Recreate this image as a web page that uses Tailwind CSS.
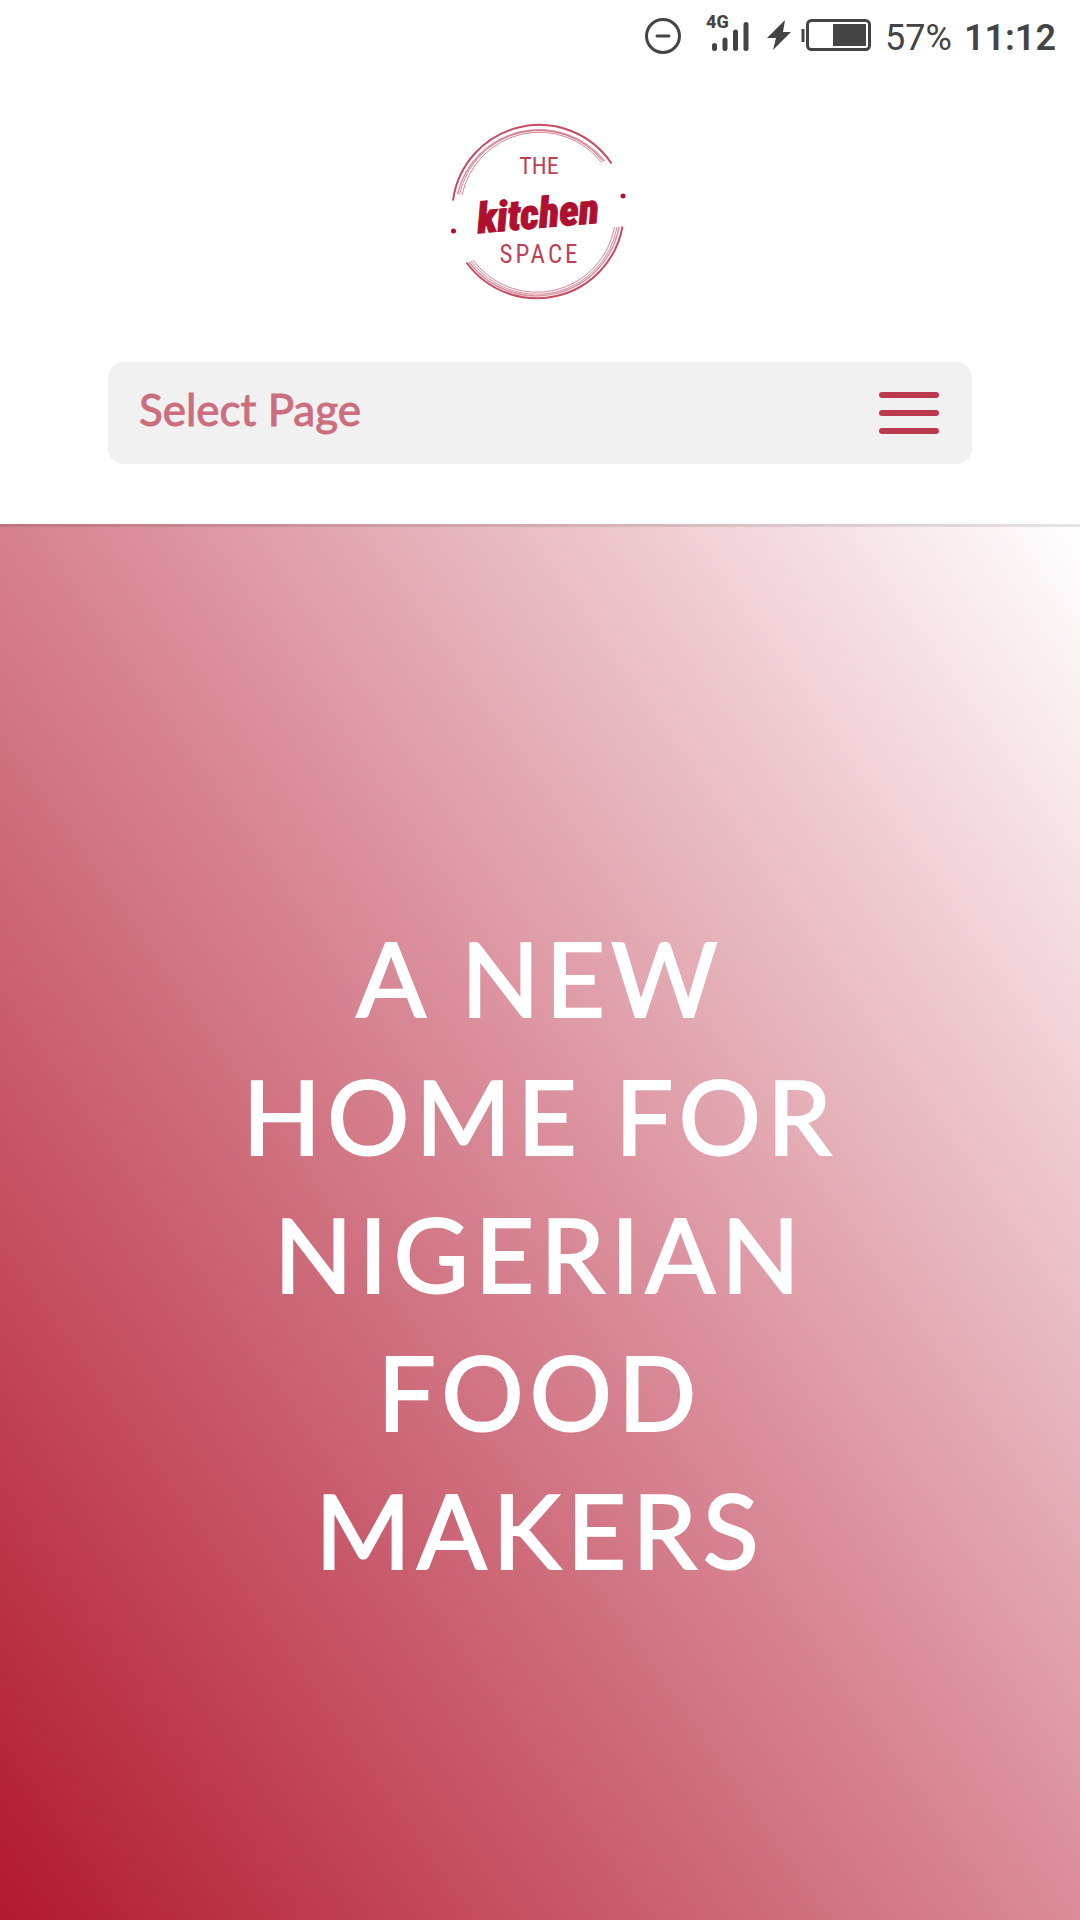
<!DOCTYPE html>
<html lang="en">
<head>
<meta charset="utf-8">
<meta name="viewport" content="width=device-width, initial-scale=1">
<title>The Kitchen Space</title>
<script src="https://cdn.jsdelivr.net/npm/@tailwindcss/browser@4"></script>
</head>
<body class="flex min-h-screen flex-col bg-white font-['Lato',sans-serif]">
  <div class="flex h-[74px] items-center justify-end pr-6 text-[#444444] font-['Roboto',sans-serif]">
    <svg class="mr-3 h-14 w-57" viewBox="0 -4 228 56" fill="none" stroke="#444" role="img" aria-label="Do not disturb, 4G, charging">
      <circle cx="18" cy="23" r="16.500" stroke-width="3"/>
      <path d="M12 23h12" stroke-width="3" stroke-linecap="round"/>
      <text x="61" y="15" font-size="18" font-weight="800" fill="#444" stroke="none">4G</text>
      <path d="M69.500 32.500v3M80 27v8.500M90.500 19v16.500M101 11.500v24" stroke-width="5" stroke-linecap="round"/>
      <path d="M140 7L122 25h9l-3 12 18-18h-8z" fill="#444" stroke="none"/>
      <path d="M158 16v13" stroke-width="3"/>
      <rect x="162.500" y="7.500" width="62" height="29" rx="4" stroke-width="3"/>
      <rect x="188" y="11" width="33" height="22" fill="#444" stroke="none"/>
    </svg>
    <span class="pt-0.5 text-[36px] leading-12">57%</span>
    <span class="ml-3 pt-0.5 text-[36px] leading-12 font-semibold">11:12</span>
  </div>
  <header class="relative z-10 flex flex-col items-center bg-white px-[10%] pt-9 pb-[60px] shadow-[0_3px_0_rgba(0,0,0,0.1)]">
    <a href="#" class="mb-[52px] block" aria-label="The Kitchen Space">
      <svg class="h-50 w-50" viewBox="0 0 200 200" fill="none" stroke="#b01030">
        <path d="M13 90.500A87 87 0 0 1 171.500 53.500" stroke-width="2" opacity=".75"/>
        <path d="M17.500 84A84 84 0 0 1 164.500 51" stroke-width="1.500" opacity=".45"/>
        <path d="M19.500 84.500A81.500 81.500 0 0 1 163 51.500" stroke-width="1" opacity=".5"/>
        <path d="M22 85A79 79 0 0 1 161.500 52.500" stroke-width="1" opacity=".5"/>
        <path d="M182.500 116.500A87 87 0 0 1 26.500 152.500" stroke-width="2" opacity=".75"/>
        <path d="M179 117A84 84 0 0 1 29 152" stroke-width="1.500" opacity=".45"/>
        <path d="M177 117A81.500 81.500 0 0 1 31 151" stroke-width="1" opacity=".5"/>
        <path d="M174.500 117A79 79 0 0 1 33 150" stroke-width="1" opacity=".5"/>
        <g fill="#b01030" stroke="none" text-anchor="middle">
          <circle cx="13.500" cy="121" r="2.500"/>
          <circle cx="183" cy="86" r="2.500"/>
          <text x="99" y="64" font-size="24" font-weight="400" opacity=".8" class="font-['Liberation_Sans_Narrow','Roboto_Condensed',sans-serif]">THE</text>
          <text x="98" y="118" font-size="42" font-weight="900" font-style="italic" stroke="#b01030" stroke-width="1" transform="rotate(-5 98 106)" class="font-['Roboto_Condensed',sans-serif]">kitchen</text>
          <text x="100" y="153" font-size="25" font-weight="400" letter-spacing="3" opacity=".8" class="font-['Liberation_Sans_Narrow','Roboto_Condensed',sans-serif]">SPACE</text>
        </g>
      </svg>
    </a>
    <button type="button" class="flex h-[102px] w-full items-center justify-between rounded-2xl bg-[#f1f1f1] pr-[33px] pl-[31px] text-[44px] leading-none text-[#cb6f7f]">
      <span class="pb-2 [-webkit-text-stroke:1px_#cb6f7f]">Select Page</span>
      <span class="flex w-15 flex-col gap-3">
        <span class="h-1.5 rounded-full bg-[#bb3a50]"></span>
        <span class="h-1.5 rounded-full bg-[#bb3a50]"></span>
        <span class="h-1.5 rounded-full bg-[#bb3a50]"></span>
      </span>
    </button>
  </header>
  <main class="flex flex-1 flex-col items-center justify-center bg-[linear-gradient(55deg,#b1192f,#d98b98_52%,#ffffff)] px-[20%] pt-[62px]">
    <h1 class="text-center text-[103px] leading-[138px] tracking-[6px] text-white [-webkit-text-stroke:2px_white]">A NEW HOME FOR NIGERIAN FOOD MAKERS</h1>
  </main>
</body>
</html>
